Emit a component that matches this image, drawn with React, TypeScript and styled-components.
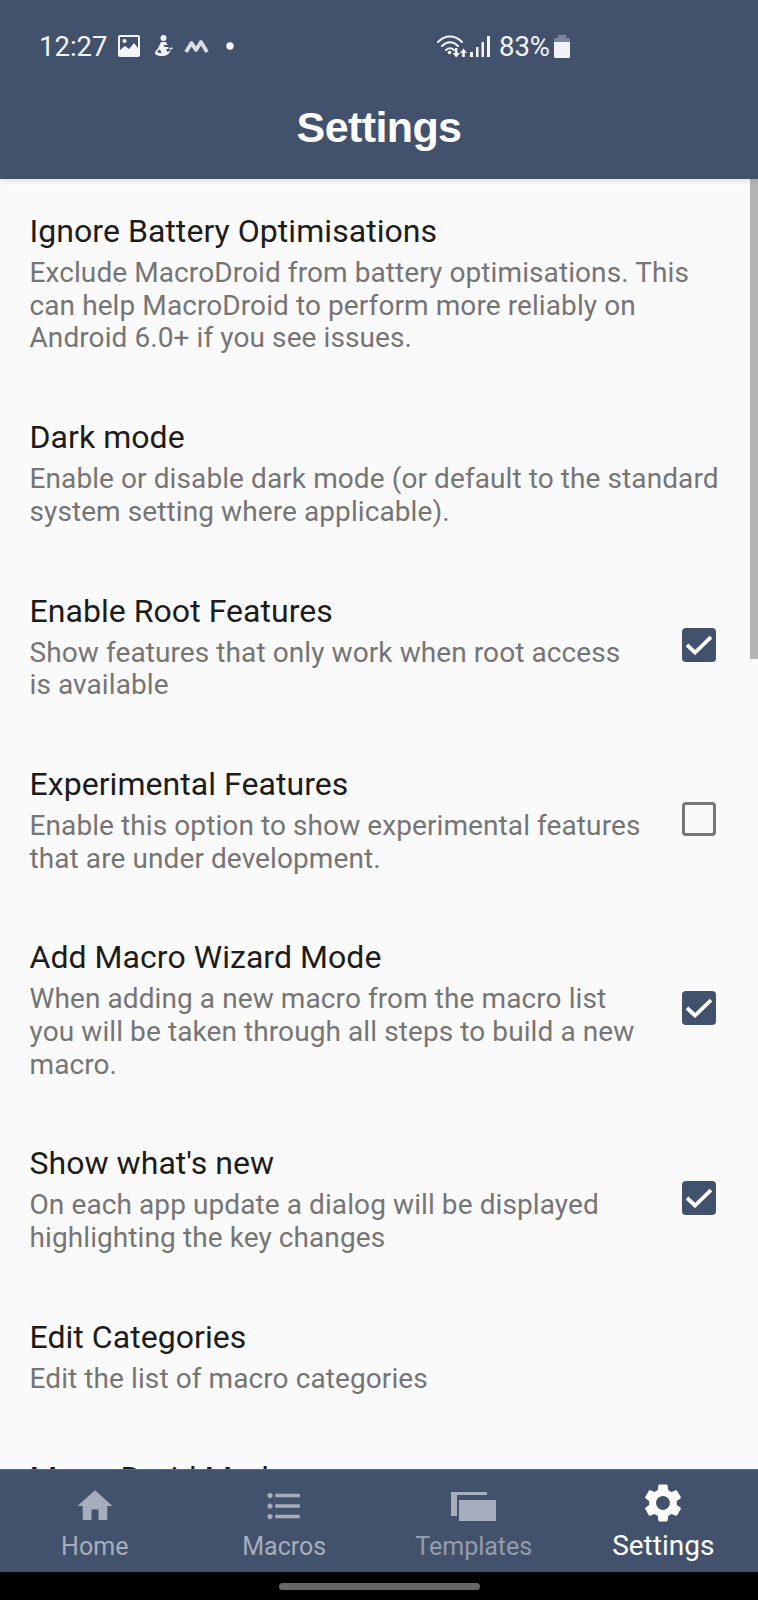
import React from "react";
import styled, { createGlobalStyle } from "styled-components";

const Global = createGlobalStyle`
  html, body { margin: 0; padding: 0; background: #000; }
  #root { width: 758px; height: 1600px; }
`;

const Screen = styled.div`
  width: 758px;
  height: 1600px;
  display: flex;
  flex-direction: column;
  font-family: Roboto, "Noto Sans", sans-serif;
  background: #000;
  overflow: hidden;
`;

const AppBar = styled.header`
  flex: 0 0 179px;
  background: #43526c;
  display: flex;
  flex-direction: column;
  position: relative;
  z-index: 2;
  box-shadow: 0 2px 6px rgba(0, 0, 0, 0.12);
`;

const StatusBar = styled.div`
  flex: 0 0 92px;
  box-sizing: border-box;
  padding: 0 188px 0 39px;
  display: flex;
  align-items: center;
  justify-content: space-between;
  color: #f3f4f7;
`;

const StatusGroup = styled.div`
  display: flex;
  align-items: center;
`;

const Clock = styled.span`
  font-size: 27.5px;
  font-weight: 400;
  width: 79px;
`;

const Percent = styled.span`
  font-size: 27.5px;
  margin: 0 4px 0 9px;
`;

const StatusIcon = styled.svg<{ $gap?: number }>`
  display: block;
  margin-right: ${(p) => p.$gap ?? 0}px;
`;

const Title = styled.h1`
  margin: 0;
  flex: 1;
  display: flex;
  align-items: center;
  justify-content: center;
  padding-bottom: 16px;
  font-family: "Liberation Sans", Arial, sans-serif;
  font-size: 43px;
  font-weight: 700;
  letter-spacing: -0.6px;
  color: #fff;
`;

const Content = styled.main`
  flex: 1;
  min-height: 0;
  background: #fafafa;
  overflow: hidden;
  position: relative;
  padding-top: 32px;
`;

const ScrollThumb = styled.div`
  position: absolute;
  top: 0;
  right: 0;
  width: 8px;
  height: 480px;
  background: #b4b4b4;
`;

const Row = styled.div`
  display: flex;
  align-items: center;
  padding: 0 30px 0 29.5px;
  margin-bottom: 62px;
`;

const RowText = styled.div<{ $withBox: boolean }>`
  flex: 1;
  min-width: 0;
  padding-right: ${(p) => (p.$withBox ? "20px" : "0")};
`;

const RowTitle = styled.div`
  font-size: 32px;
  letter-spacing: 0.05px;
  line-height: 40px;
  margin-bottom: 6px;
  color: #1c1c1c;
`;

const RowDesc = styled.div`
  font-size: 28px;
  letter-spacing: 0.09px;
  line-height: 32.7px;
  white-space: nowrap;
  color: #757575;
`;

const Box = styled.div<{ $checked: boolean }>`
  flex: 0 0 34px;
  height: 34px;
  box-sizing: border-box;
  margin: 0 12px 2px 0;
  border-radius: 4px;
  display: flex;
  align-items: center;
  justify-content: center;
  background: ${(p) => (p.$checked ? "#43526c" : "transparent")};
  border: ${(p) => (p.$checked ? "none" : "3.5px solid #777")};
`;

const BottomNav = styled.nav`
  flex: 0 0 103px;
  background: #43526c;
  border-top: 1px solid #5d6a81;
  box-sizing: border-box;
  display: grid;
  grid-template-columns: repeat(4, 1fr);
  position: relative;
  z-index: 2;
`;

const NavItem = styled.div`
  position: relative;
  display: flex;
  flex-direction: column;
  align-items: center;
`;

const NavIconSlot = styled.div<{ $drop: number }>`
  height: 62px;
  box-sizing: border-box;
  padding-top: ${(p) => p.$drop}px;
  display: flex;
  align-items: center;
  justify-content: center;
`;

const NavLabel = styled.span<{ $active?: boolean; $dim?: boolean }>`
  font-size: ${(p) => (p.$active ? "28px" : "25px")};
  line-height: 30px;
  margin-top: ${(p) => (p.$active ? "-1px" : "0")};
  color: ${(p) => (p.$active ? "#ffffff" : p.$dim ? "#939cae" : "#a6aebd")};
`;

const GestureBar = styled.div`
  flex: 0 0 28px;
  background: #000;
  display: flex;
  align-items: center;
  justify-content: center;
`;

const Pill = styled.div`
  width: 201px;
  height: 7px;
  border-radius: 4px;
  background: #666;
`;

const rows = [
  { t: "Ignore Battery Optimisations", d: ["Exclude MacroDroid from battery optimisations. This", "can help MacroDroid to perform more reliably on", "Android 6.0+ if you see issues."] },
  { t: "Dark mode", d: ["Enable or disable dark mode (or default to the standard", "system setting where applicable)."] },
  { t: "Enable Root Features", d: ["Show features that only work when root access", "is available"], c: true },
  { t: "Experimental Features", d: ["Enable this option to show experimental features", "that are under development."], c: false },
  { t: "Add Macro Wizard Mode", d: ["When adding a new macro from the macro list", "you will be taken through all steps to build a new", "macro."], c: true },
  { t: "Show what's new", d: ["On each app update a dialog will be displayed", "highlighting the key changes"], c: true },
  { t: "Edit Categories", d: ["Edit the list of macro categories"] },
  { t: "MacroDroid Mode", d: [] as string[] },
] as { t: string; d: string[]; c?: boolean }[];

export default function App() {
  return (
    <Screen>
      <Global />
      <AppBar>
        <StatusBar>
          <StatusGroup>
            <Clock>12:27</Clock>
            <StatusIcon $gap={13} width="22" height="22" viewBox="0 0 22 22">
              <path fillRule="evenodd" fill="#f3f4f7" d="M2 0h18a2 2 0 0 1 2 2v18a2 2 0 0 1-2 2H2a2 2 0 0 1-2-2V2a2 2 0 0 1 2-2zm0 2v13l5-4 4 3 5-6 4 5V2zM6.500 4a2 2 0 1 1 0 4 2 2 0 0 1 0-4z" />
            </StatusIcon>
            <StatusIcon $gap={11} width="20" height="22" viewBox="0 0 20 22">
              <circle cx="10.500" cy="3" r="3" fill="#f3f4f7" />
              <path fill="#f3f4f7" fillRule="evenodd" d="M8 7h5l1.500 3h-4l1 2h4v2h-2.500l1.500 3c1.500-.5 2.500-1.500 3-3h-1.500l2.500-2 1.500 2H18c-.5 3-3 7-8 7-3 0-8-.5-8-3 0-2 2-3 3-4.500zM5 15.500c-1 1-.8 2 .5 2.200l3 .5-1.500-4z" />
            </StatusIcon>
            <StatusIcon $gap={17} width="25" height="15" viewBox="0 0 25 15">
              <path fill="none" stroke="#d9dce3" strokeWidth="3.800" strokeLinejoin="round" d="M2 13 7.500 4 12 11l5-8 6 10" />
            </StatusIcon>
            <StatusIcon width="8" height="8" viewBox="0 0 8 8">
              <circle cx="4" cy="4" r="3.700" fill="#f3f4f7" />
            </StatusIcon>
          </StatusGroup>
          <StatusGroup>
            <StatusIcon $gap={3} width="30" height="24" viewBox="0 0 30 24">
              <g fill="none" stroke="#f3f4f7" strokeWidth="2" strokeLinecap="round">
                <path d="M1 8c7-7.500 17-7.500 24 0" />
                <path d="M5 12c5-5 11-5 16 0" />
                <path d="M9 16c3-2.500 5-2.500 8 0" />
              </g>
              <circle cx="12.500" cy="18.500" r="1.800" fill="#f3f4f7" />
              <path fill="#f3f4f7" d="M18 14h2.400v5H23l-3.800 4.500L15.500 19H18zM26.500 14.500 30 19h-2.200v4h-2.600v-4H23z" />
            </StatusIcon>
            <StatusIcon width="20" height="22" viewBox="0 0 20 22">
              <rect x="0" y="17" width="3" height="5" fill="#f3f4f7" />
              <rect x="6" y="12" width="2.500" height="10" fill="#f3f4f7" />
              <rect x="11.500" y="7" width="2.500" height="15" fill="#f3f4f7" />
              <rect x="17" y="1" width="3" height="21" fill="#f3f4f7" />
            </StatusIcon>
            <Percent>83%</Percent>
            <StatusIcon width="16" height="23" viewBox="0 0 16 23">
              <path fill="#7c869a" d="M4 0h8v3h2.500A1.500 1.500 0 0 1 16 4.500V7H0V4.500A1.500 1.500 0 0 1 1.500 3H4z" />
              <path fill="#f1f2f5" d="M0 7h16v14.500a1.500 1.500 0 0 1-1.500 1.500h-13A1.500 1.500 0 0 1 0 21.500z" />
            </StatusIcon>
          </StatusGroup>
        </StatusBar>
        <Title>Settings</Title>
      </AppBar>

      <Content>
        <ScrollThumb />
        {rows.map((r) => (
          <Row key={r.t}>
            <RowText $withBox={r.c !== undefined}>
              <RowTitle>{r.t}</RowTitle>
              {r.d.map((line) => (
                <RowDesc key={line}>{line}</RowDesc>
              ))}
            </RowText>
            {r.c !== undefined && (
              <Box $checked={r.c}>
                {r.c && (
                  <svg width="26" height="20" viewBox="0 0 26 20">
                    <path d="M1 10 9 17.500 25 2" fill="none" stroke="#fff" strokeWidth="3.800" />
                  </svg>
                )}
              </Box>
            )}
          </Row>
        ))}
      </Content>

      <BottomNav>
        <NavItem>
          <NavIconSlot $drop={10}>
            <svg width="42" height="42" viewBox="0 0 24 24">
              <path fill="#a6aebd" d="M10 20v-6h4v6h5v-8h3L12 3 2 12h3v8z" />
            </svg>
          </NavIconSlot>
          <NavLabel>Home</NavLabel>
        </NavItem>
        <NavItem>
          <NavIconSlot $drop={10}>
            <svg width="42" height="42" viewBox="0 0 24 24">
              <path fill="#a6aebd" d="M4 10.500c-.83 0-1.500.67-1.500 1.500s.67 1.500 1.500 1.500 1.500-.67 1.500-1.500-.67-1.500-1.500-1.500zm0-6c-.83 0-1.500.67-1.500 1.500S3.170 7.500 4 7.500 5.500 6.830 5.500 6 4.830 4.500 4 4.500zm0 12c-.83 0-1.500.68-1.500 1.500s.68 1.500 1.500 1.500 1.500-.68 1.500-1.500-.67-1.500-1.500-1.500zM7 19h14v-2H7v2zm0-6h14v-2H7v2zm0-8v2h14V5H7z" />
            </svg>
          </NavIconSlot>
          <NavLabel>Macros</NavLabel>
        </NavItem>
        <NavItem>
          <NavIconSlot $drop={12}>
            <svg width="46" height="30" viewBox="0 0 46 30">
              <path fill="#a6aebd" d="M0 0h36v3H6v21H0z" />
              <path fill="#a6aebd" d="M8 8h37v21H8z" />
            </svg>
          </NavIconSlot>
          <NavLabel $dim>Templates</NavLabel>
        </NavItem>
        <NavItem>
          <NavIconSlot $drop={4}>
            <svg width="46" height="46" viewBox="0 0 24 24">
              <path fill="#fff" d="M19.140 12.940c.04-.3.06-.61.06-.94 0-.32-.02-.64-.07-.94l2.030-1.580c.18-.14.23-.41.12-.61l-1.920-3.320c-.12-.22-.37-.29-.59-.22l-2.390.96c-.5-.38-1.030-.7-1.620-.94l-.36-2.540c-.04-.24-.24-.41-.48-.41h-3.840c-.24 0-.43.17-.47.41l-.36 2.540c-.59.24-1.130.57-1.620.94l-2.390-.96c-.22-.08-.47 0-.59.22L2.740 8.870c-.12.21-.08.47.12.61l2.030 1.580c-.05.3-.09.63-.09.94s.02.64.07.94l-2.030 1.580c-.18.14-.23.41-.12.61l1.920 3.320c.12.22.37.29.59.22l2.390-.96c.5.38 1.030.7 1.620.94l.36 2.540c.05.24.24.41.48.41h3.840c.24 0 .44-.17.47-.41l.36-2.540c.59-.24 1.130-.56 1.620-.94l2.390.96c.22.08.47 0 .59-.22l1.920-3.320c.12-.22.07-.47-.12-.61l-2.010-1.580zM12 15.600c-1.980 0-3.600-1.620-3.600-3.600s1.620-3.600 3.600-3.600 3.600 1.620 3.600 3.600-1.620 3.600-3.600 3.600z" />
            </svg>
          </NavIconSlot>
          <NavLabel $active>Settings</NavLabel>
        </NavItem>
      </BottomNav>
      <GestureBar>
        <Pill />
      </GestureBar>
    </Screen>
  );
}
